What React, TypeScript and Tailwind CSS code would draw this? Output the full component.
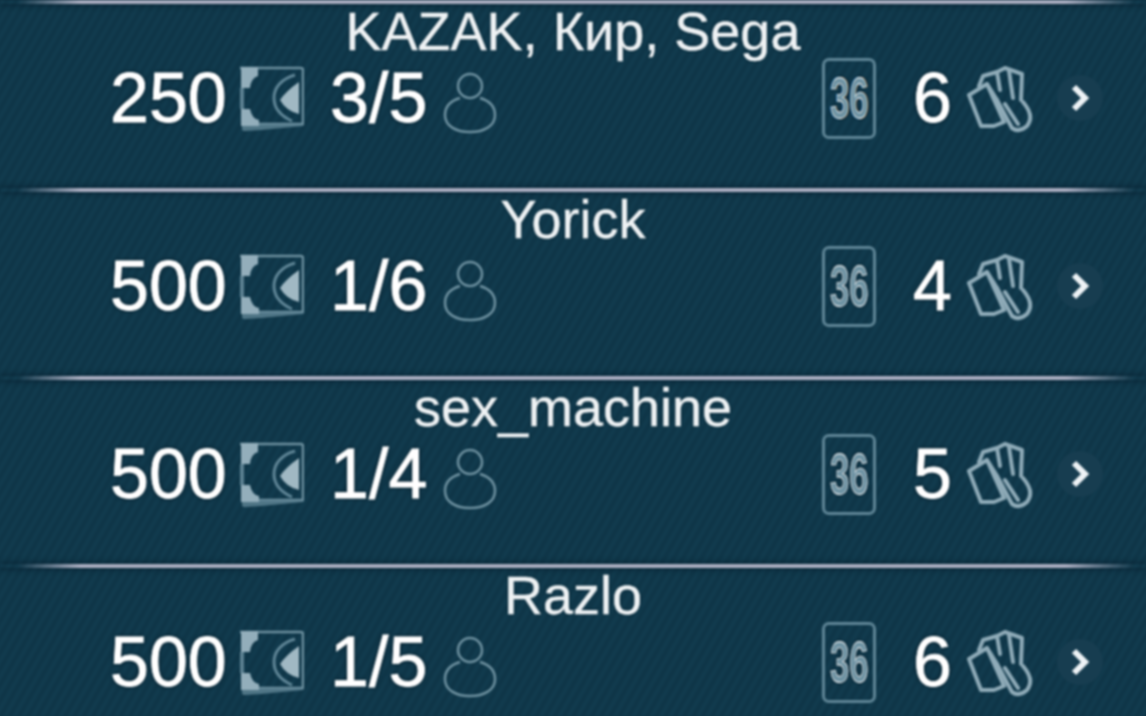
import React from "react";

function Bill() {
  return (
    <svg width="65" height="68" viewBox="0 0 65 68" className="block">
      <path d="M1 4 H62 Q64 4 64 6 V60 H18" fill="none" stroke="#6d909f" strokeWidth="2.5" />
      <path d="M3 61 L3 65 Q3 67 6 67 L22 66 L64 62 V60 H3 Z" fill="#5b8091" opacity="0.85" />
      <path d="M2 3 H19 V12 Q12 14 11 24 L2 24 Z" fill="#93aebb" />
      <path d="M2 45 L11 45 Q13 55 20 56 V62 H2 Z" fill="#93aebb" />
      <path d="M3 24 V45" stroke="#5b8091" strokeWidth="4" />
      <path d="M56 11 C42 15 35 24 35 34 C35 44 42 52 53 57" fill="none" stroke="#5f8596" strokeWidth="3" />
      <path d="M60 18 L60 50 Q47 47 41 36 Q47 27 60 18 Z" fill="#a0b8c3" />
    </svg>
  );
}

function Person() {
  return (
    <svg width="54" height="62" viewBox="0 0 54 62" className="block">
      <circle cx="27" cy="14" r="12" fill="none" stroke="#6d909f" strokeWidth="2.5" />
      <path d="M17 26 C7 29 2 35 2 43 C2 54 13 60 27 60 C41 60 52 54 52 43 C52 35 47 29 37 26" fill="none" stroke="#6d909f" strokeWidth="2.5" />
    </svg>
  );
}

function Deck() {
  return (
    <div className="flex h-[81px] w-[54px] items-center justify-center overflow-hidden rounded-[7px] border-[3px] border-[#5f8596]">
      <span className="scale-x-[0.6] text-[58px] leading-none font-bold text-[#6f93a3]">36</span>
    </div>
  );
}

function Cards() {
  return (
    <svg width="68" height="68" viewBox="0 0 68 68" className="block">
      <g fill="none" stroke="#8fabb8" strokeWidth="4" strokeLinejoin="round" strokeLinecap="round">
        <path d="M2 29 L20 18 L37 56 L27 60 L14 60 Z" />
        <path d="M12 20 L16 10 L30 6 L38 2 L55 8 L54 34" />
        <path d="M20 18 L30 34" />
        <path d="M30 6 L33 24" />
        <path d="M42 5 L46 32" />
        <path d="M30 34 L45 62 Q52 67 60 60 Q68 50 56 36" />
        <path d="M38 38 L51 58" />
      </g>
    </svg>
  );
}

function Chevron() {
  return (
    <div className="flex h-[46px] w-[46px] items-center justify-center rounded-full bg-[#173d50]">
      <svg width="20" height="30" viewBox="0 0 20 30">
        <path d="M4 4 L15 15 L4 26" fill="none" stroke="#eef3f6" strokeWidth="6" />
      </svg>
    </div>
  );
}

const rows = [
  { name: "KAZAK, Кир, Sega", bet: "250", seats: "3/5", cards: "6" },
  { name: "Yorick", bet: "500", seats: "1/6", cards: "4" },
  { name: "sex_machine", bet: "500", seats: "1/4", cards: "5" },
  { name: "Razlo", bet: "500", seats: "1/5", cards: "6" },
];

function Row({ name, bet, seats, cards }: (typeof rows)[number]) {
  return (
    <div className="h-[188px] shrink-0">
      <div className="h-[4px] bg-[linear-gradient(90deg,transparent_1.5%,#a9adc0_7%,#a9adc0_93%,transparent_99%)] shadow-[0_0_6px_#061a27]" />
      <div className="mt-[1px] mb-[2px] h-[52px] text-center text-[54px] leading-[52px] text-[#eef2f4] [-webkit-text-stroke:0.4px_#eef2f4] [text-shadow:0_0_3px_#06202e]">
        {name}
      </div>
      <div className="flex h-[78px] items-center pl-[110px] pr-[43px] text-[70px] leading-none text-white [-webkit-text-stroke:0.8px_white] [text-shadow:0_0_4px_#04131e]">
        <span className="w-[129px]">{bet}</span>
        <Bill />
        <span className="ml-[26px] mr-[16px]">{seats}</span>
        <div className="mt-[10px]">
          <Person />
        </div>
        <div className="ml-auto">
          <Deck />
        </div>
        <span className="w-[76px] text-right">{cards}</span>
        <div className="ml-[15px] mt-[4px]">
          <Cards />
        </div>
        <div className="ml-[22px]">
          <Chevron />
        </div>
      </div>
    </div>
  );
}

export default function App() {
  return (
    <div className="h-[716px] w-[1146px] overflow-hidden bg-[#103749]">
      <div
        className="-mx-[4px] flex h-[716px] flex-col bg-[repeating-linear-gradient(120deg,#0f3648_0px,#0f3648_4px,#113a4d_4px,#113a4d_8px)] px-[4px] blur-[0.8px]"
        style={{ fontFamily: '"Liberation Sans", Arial, sans-serif' }}
      >
        {rows.map((r) => (
          <Row key={r.name} {...r} />
        ))}
      </div>
    </div>
  );
}
